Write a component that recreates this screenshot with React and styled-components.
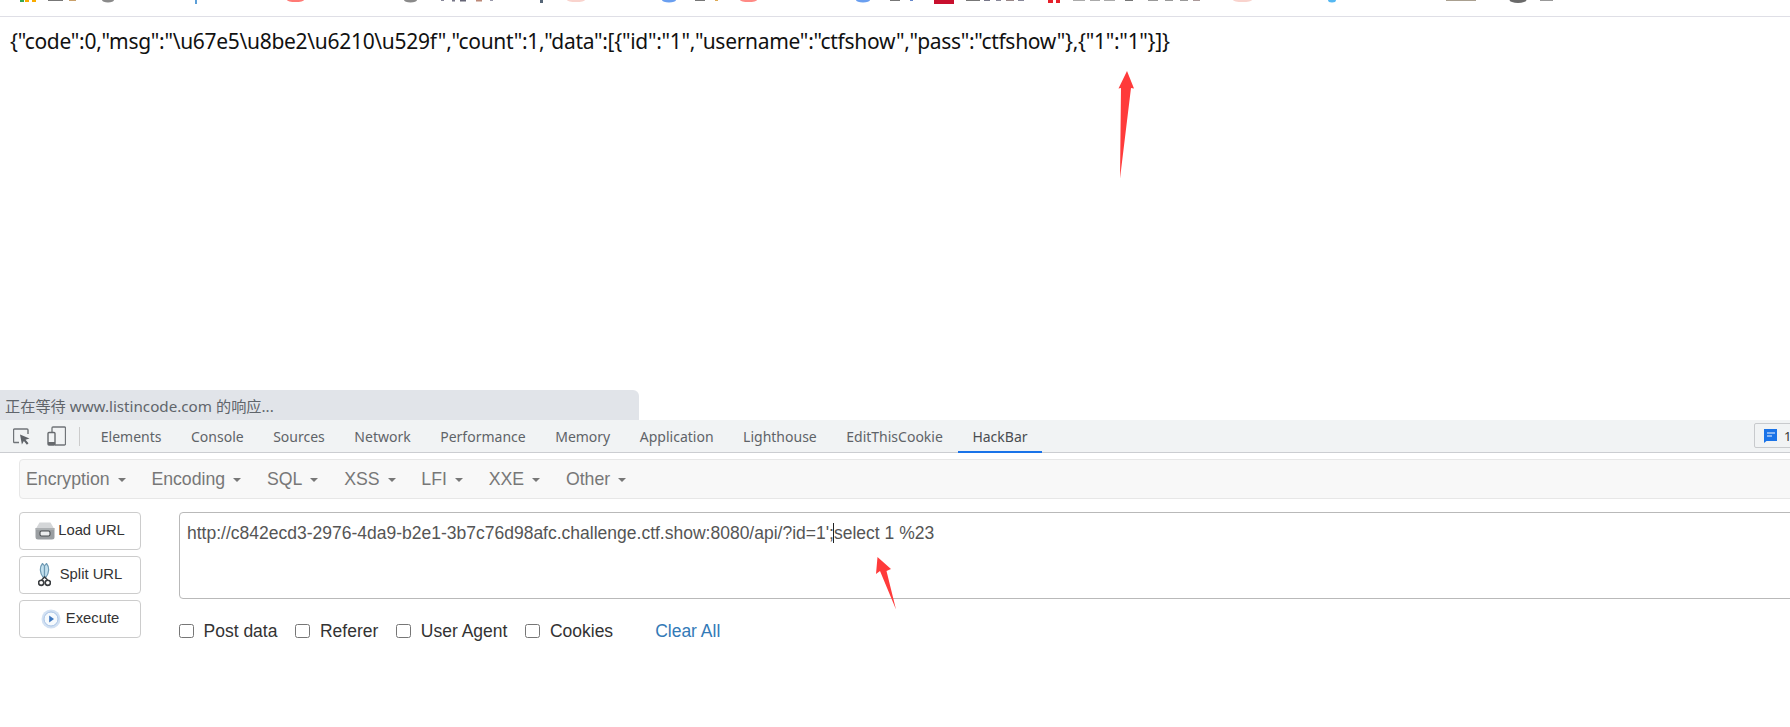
import React from 'react';
import styled, { createGlobalStyle } from 'styled-components';

const Global = createGlobalStyle`
  html, body { margin: 0; padding: 0; background: #fff; overflow: hidden; }
  * { box-sizing: border-box; }
`;

const Page = styled.div`
  position: relative; width: 1790px; height: 727px; overflow: hidden;
  display: flex; flex-direction: column;
  font-family: "Liberation Sans", Arial, sans-serif;
`;
const BookmarkStrip = styled.svg`
  display: block; flex: none; width: 1790px; height: 17px;
`;
const Main = styled.main`
  flex: none; height: 403px; display: flex; flex-direction: column; justify-content: space-between;
`;
const Json = styled.pre`
  margin: 0; padding: 10px 0 0 10px;
  font-family: "Noto Sans", "Open Sans", sans-serif; font-size: 21px; line-height: 28px; color: #111;
  letter-spacing: -0.3px;
`;
const StatusBubble = styled.div`
  width: 639px; height: 30px; background: #e1e4e9; border-top-right-radius: 6px;
  padding: 0 0 0 5px; display: flex; align-items: center;
  font-family: "Noto Sans", "Noto Sans CJK SC", sans-serif; font-size: 15.2px; color: #60656b;
`;
const Devtools = styled.section`
  flex: 1; min-height: 0; display: flex; flex-direction: column;
`;
const TabBar = styled.div`
  height: 33px; flex: none; display: flex; align-items: stretch; background: #f1f3f4;
  border-bottom: 1px solid #cbcdd1; position: relative;
`;
const ToolIcons = styled.div`
  width: 86px; flex: none; display: flex; align-items: center; padding-left: 13px; gap: 17px;
`;
const Divider = styled.span`
  width: 1px; height: 19px; background: #ccc; margin-left: -4px;
`;
const Tab = styled.div`
  padding: 0 14.78px; display: flex; align-items: center; position: relative;
  font-family: "Noto Sans", sans-serif; font-size: 14px;
  color: ${p => (p.$active ? '#4a4d51' : '#5f6368')};
  ${p => p.$active && `
    &::after { content: ""; position: absolute; left: 0; right: 0; bottom: -1px; height: 2px; background: #1a73e8; }
  `}
`;
const IssueBadge = styled.div`
  position: absolute; left: 1754px; top: 3px; width: 60px; height: 25px;
  border: 1px solid #c8cacd; border-radius: 2px; display: flex; align-items: center; gap: 7px; padding-left: 9px;
  font-family: "Noto Sans", sans-serif; font-size: 13px; color: #333;
`;
const HackBar = styled.div`
  padding: 6px 0 0 19px;
`;
const Menu = styled.nav`
  height: 40px; margin-right: -20px; display: flex; align-items: center; padding-left: 6px;
  background: #f8f8f8; border: 1px solid #e7e7e7; border-radius: 4px;
`;
const MenuItem = styled.div`
  display: flex; align-items: center; gap: 8px; font-size: 17.7px; color: #777; margin-right: ${p => p.$gap}px;
`;
const Caret = styled.i`
  width: 0; height: 0; border-left: 4.5px solid transparent; border-right: 4.5px solid transparent;
  border-top: 4.5px solid #777; margin-top: 2px;
`;
const Workspace = styled.div`
  display: flex; margin-top: 13px; gap: 38px;
`;
const Buttons = styled.div`
  width: 122px; flex: none; display: flex; flex-direction: column; gap: 6.5px;
`;
const ActionButton = styled.button`
  height: 37.5px; background: #fff; border: 1px solid #ccc; border-radius: 4px; padding: 0 0 2px;
  display: flex; align-items: center; justify-content: center; gap: ${p => p.$gap}px;
  font-family: inherit; font-size: 14.8px; color: #333;
  svg { margin-top: 3px; }
`;
const Right = styled.div`
  flex: 1; display: flex; flex-direction: column; gap: 21px;
`;
const UrlField = styled.div`
  height: 87px; margin-right: -20px; border: 1px solid #b9b9b9; border-radius: 4px;
  padding: 10px 7px; font-size: 17.5px; line-height: 20px; color: #555; white-space: nowrap;
`;
const TextCaret = styled.span`
  display: inline-block; width: 0; height: 20px; border-left: 1px solid #222; vertical-align: top; margin-left: -1px;
`;
const Options = styled.div`
  display: flex; align-items: center; height: 22px;
`;
const Option = styled.label`
  display: flex; align-items: center; gap: 10px; margin-right: 18px; font-size: 17.5px; color: #333;
`;
const Check = styled.input.attrs({ type: 'checkbox' })`
  appearance: none; margin: 0; width: 14.5px; height: 14.5px; background: #fff;
  border: 1px solid #767676; border-radius: 2.5px;
`;
const ClearAll = styled.a`
  margin-left: 24px; font-size: 17.5px; color: #337ab7;
`;
const Arrow = styled.svg`
  position: absolute; left: 0; top: 0; width: 1790px; height: 727px; pointer-events: none;
`;

const frags = [
  [20,4,'#34a853',2],[25,4,'#f9ab00',2],[32,4,'#f9ab00',2],[48,15,'#777',1],[69,7,'#c9a06a',1],
  [195,2,'#5c9fd8',4],
  [441,3,'#889',1],[452,3,'#778',1.5],[460,6,'#667',1.5],[476,6,'#b87',1.5],[490,3,'#99a',1],
  [540,3,'#567',3],[695,10,'#777',1],[715,3,'#da5',1],
  [890,10,'#777',1],[910,3,'#68c',1],[934,20,'#c8102e',4],
  [966,14,'#777',1],[984,6,'#778',1],[996,5,'#889',1],[1006,8,'#988',1],[1018,6,'#889',1],
  [1048,5,'#e6202a',3],[1056,4,'#e6202a',3],[1073,12,'#aaa',1],[1090,10,'#aaa',1],[1104,11,'#aaa',1],
  [1125,8,'#777',1],[1148,10,'#999',1],[1165,8,'#999',1],[1180,8,'#999',1],[1193,7,'#a99',1],
  [1446,30,'#aaa090',1],[1540,13,'#999',1],
];
const blobs = [
  [108,6,'#8a8a8a',2.5],[295.5,8.5,'#ff7a75',2],[410.5,6.5,'#8a8a8a',2.5],[576,9,'#f9d3cd',2],
  [669,7,'#6a9ff0',2.5],[748.5,8.5,'#ff8a85',2],[863,7,'#6a9ff0',2.5],[1242.5,9.5,'#f9d3cd',2],
  [1332,4,'#55b8f2',2.5],[1518,8.5,'#6a6a6a',3],
];

const InspectIcon = () => (
  <svg width="17" height="17" viewBox="0 0 17 17" fill="none">
    <path d="M6 14.5H1.5a1 1 0 0 1-1-1V2a1 1 0 0 1 1-1H14a1 1 0 0 1 1 1v4" stroke="#707478" strokeWidth="1.4" />
    <path d="M7 6.5l9.5 4-4 1.3 3 3.5-1.6 1.4-3-3.7-2 3.5z" fill="#5f6368" />
  </svg>
);
const DeviceIcon = () => (
  <svg width="19" height="20" viewBox="0 0 19 20" fill="none">
    <path d="M5 6V2a1 1 0 0 1 1-1h11.5a1 1 0 0 1 1 1v16a1 1 0 0 1-1 1H8" stroke="#707478" strokeWidth="1.3" />
    <rect x="1" y="6.5" width="7" height="12.5" rx="1" stroke="#66696d" strokeWidth="1.4" />
    <rect x="1" y="16" width="7" height="3" fill="#66696d" />
  </svg>
);
const ChatIcon = () => (
  <svg width="13" height="14" viewBox="0 0 13 14">
    <path d="M0 0h13v12H2.5L0 14z" fill="#1a73e8" />
    <rect x="3" y="3.4" width="8" height="1.2" fill="#cfe2fb" />
    <rect x="3" y="6.4" width="5" height="1.2" fill="#cfe2fb" />
  </svg>
);
const DriveIcon = () => (
  <svg width="20" height="18" viewBox="0 0 20 18">
    <path d="M4.5 0.5h11l3.5 6H1z" fill="#d4d6d8" />
    <path d="M1 6h18.5v9a2.5 2.5 0 0 1-2.5 2.5H3A2.5 2.5 0 0 1 .5 15V6z" fill="#9a9ea1" />
    <rect x="5" y="9" width="10" height="5" rx="1.5" fill="#eceeef" stroke="#4b4f52" strokeWidth="1.1" />
    <path d="M0.5 7h19" stroke="#bcbfc1" />
  </svg>
);
const ScissorsIcon = () => (
  <svg width="13" height="24" viewBox="0 0 13 24" fill="none">
    <path d="M4.5 0.5C1.5 4 1.5 10 5.5 15L6.5 13V3z" stroke="#6f9ab4" strokeWidth="1.2" fill="#c4e1ef" />
    <path d="M8.5 0.5c3 3.5 3 9.5-1 14.5L6.5 13V3z" stroke="#6f9ab4" strokeWidth="1.2" fill="#c4e1ef" />
    <circle cx="3.2" cy="19.8" r="2.6" stroke="#3a3d40" strokeWidth="1.6" />
    <circle cx="9.8" cy="19.8" r="2.6" stroke="#3a3d40" strokeWidth="1.6" />
    <path d="M3.6 17l3-3 3 3" stroke="#3a3d40" strokeWidth="1.4" />
  </svg>
);
const PlayIcon = () => (
  <svg width="20" height="20" viewBox="0 0 20 20">
    <circle cx="10" cy="10" r="9.5" fill="#d2e1f3" />
    <circle cx="10" cy="10" r="7" fill="#f6fafd" stroke="#a9c4e6" />
    <path d="M8.2 6.4L13 10l-4.8 3.6z" fill="#3f78c0" />
  </svg>
);

const tabs = ['Elements','Console','Sources','Network','Performance','Memory','Application','Lighthouse','EditThisCookie','HackBar'];
const menu = [['Encryption',25.8],['Encoding',25.8],['SQL',25.8],['XSS',25.8],['LFI',25.8],['XXE',25.8],['Other',0]];
const options = ['Post data','Referer','User Agent','Cookies'];

export default function App() {
  return (
    <Page>
      <Global />
      <BookmarkStrip viewBox="0 0 1790 17">
        {frags.map(([x, w, c, h], i) => <rect key={i} x={x} y="0" width={w} height={h} fill={c} />)}
        {blobs.map(([x, r, c, h], i) => <ellipse key={i} cx={x} cy="0" rx={r} ry={h} fill={c} />)}
        <rect x="0" y="16" width="1790" height="1" fill="#dfdfe6" />
      </BookmarkStrip>
      <Main>
        <Json>{'{"code":0,"msg":"\\u67e5\\u8be2\\u6210\\u529f","count":1,"data":[{"id":"1","username":"ctfshow","pass":"ctfshow"},{"1":"1"}]}'}</Json>
        <StatusBubble>正在等待 www.listincode.com 的响应...</StatusBubble>
      </Main>
      <Devtools>
        <TabBar>
          <ToolIcons><InspectIcon /><DeviceIcon /><Divider /></ToolIcons>
          {tabs.map(t => <Tab key={t} $active={t === 'HackBar'}>{t}</Tab>)}
          <IssueBadge><ChatIcon />1</IssueBadge>
        </TabBar>
        <HackBar>
          <Menu>
            {menu.map(([m, g]) => <MenuItem key={m} $gap={g}>{m}<Caret /></MenuItem>)}
          </Menu>
          <Workspace>
            <Buttons>
              <ActionButton $gap={3}><DriveIcon />Load URL</ActionButton>
              <ActionButton $gap={9}><ScissorsIcon />Split URL</ActionButton>
              <ActionButton $gap={5}><PlayIcon />Execute</ActionButton>
            </Buttons>
            <Right>
              <UrlField>http://c842ecd3-2976-4da9-b2e1-3b7c76d98afc.challenge.ctf.show:8080/api/?id=1';<TextCaret />select 1 %23</UrlField>
              <Options>
                {options.map(o => <Option key={o}><Check />{o}</Option>)}
                <ClearAll>Clear All</ClearAll>
              </Options>
            </Right>
          </Workspace>
        </HackBar>
      </Devtools>
      <Arrow viewBox="0 0 1790 727">
        <path d="M1127 71L1134 88.5L1131 88L1120 178.5L1121 88L1118.5 88.5Z" fill="#ff3b3b" />
        <path d="M877.5 557L891 569L886.5 571L896 609.5L880 571L876 574Z" fill="#ff3b3b" />
      </Arrow>
    </Page>
  );
}
